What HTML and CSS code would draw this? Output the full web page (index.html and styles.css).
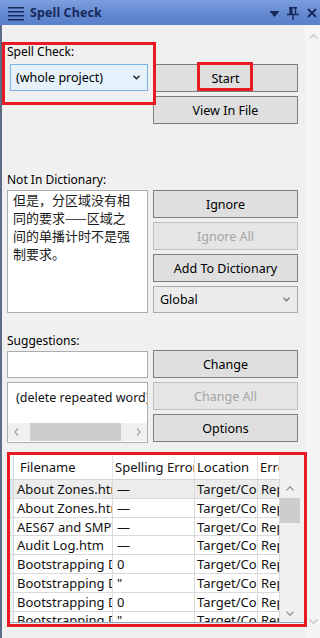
FILE: index.html
```html
<!DOCTYPE html>
<html lang="en">
<head>
<meta charset="utf-8">
<title>Spell Check</title>
<link rel="stylesheet" href="styles.css">
</head>
<body>
<div class="window">
  <div class="titlebar">
    <svg class="menu-icon" viewBox="0 0 16 18" width="16" height="18"><rect x="0" y="3" width="16" height="1.5"/><rect x="0" y="7" width="16" height="1.5"/><rect x="0" y="11" width="16" height="1.5"/><rect x="0" y="15" width="16" height="1.5"/></svg>
    <span class="title">Spell Check</span>
    <div class="tools">
      <svg class="t-drop" viewBox="0 0 9 6" width="9" height="6"><polygon points="0,0 9,0 4.5,5.5"/></svg>
      <svg class="t-pin" viewBox="0 0 12 13" width="12" height="13"><path d="M2 0.75h8M3.5 0.75v6.5M8.5 0.75v6.5M0 7.6h12M6 7.6v5.4" fill="none" stroke-width="1.5"/><rect x="3" y="1" width="2" height="6.5"/></svg>
      <svg class="t-close" viewBox="0 0 10 10" width="10" height="10"><path d="M1 1L9 9M9 1L1 9" fill="none" stroke-width="1.8"/></svg>
    </div>
  </div>
  <div class="panel">
    <div class="content">
      <section class="sec sec-scope">
        <label class="lbl scope-lbl">Spell Check:</label>
        <div class="combo combo-scope"><span>(whole project)</span><svg class="chev" viewBox="0 0 7 5" width="7" height="5"><polyline points="0.5,0.8 3.5,3.8 6.5,0.8"/></svg></div>
        <button class="btn start-btn">Start</button>
        <button class="btn view-btn">View In File</button>
      </section>

      <section class="sec sec-dict">
        <label class="lbl">Not In Dictionary:</label>
        <div class="memo">但是，分区域没有相<br>同的要求—<span class="squiggle">—</span>区域之<br>间的单播计时不是强<br>制要求。</div>
        <div class="stack">
          <button class="btn">Ignore</button>
          <button class="btn btn-disabled">Ignore All</button>
          <button class="btn">Add To Dictionary</button>
          <div class="combo combo-global"><span>Global</span><svg class="chev chev-gray" viewBox="0 0 7 5" width="7" height="5"><polyline points="0.5,0.8 3.5,3.8 6.5,0.8"/></svg></div>
        </div>
      </section>

      <section class="sec sec-sugg">
        <label class="lbl">Suggestions:</label>
        <div class="sugg-left">
          <div class="input"></div>
          <div class="list">
            <div class="list-items">(delete repeated word)</div>
            <div class="hscroll">
              <div class="hs-arrow"><svg viewBox="0 0 5 8" width="5" height="8"><polyline points="4,0.5 1,4 4,7.5"/></svg></div>
              <div class="hs-track"><div class="hs-thumb"></div></div>
              <div class="hs-arrow"><svg viewBox="0 0 5 8" width="5" height="8"><polyline points="1,0.5 4,4 1,7.5"/></svg></div>
            </div>
          </div>
        </div>
        <div class="stack">
          <button class="btn">Change</button>
          <button class="btn btn-disabled">Change All</button>
          <button class="btn">Options</button>
        </div>
      </section>

      <div class="dg">
        <div class="dg-table">
          <div class="dg-row dg-head">
            <div class="c rh"></div>
            <div class="c h h-first">Filename</div>
            <div class="c h">Spelling Errors</div>
            <div class="c h">Location</div>
            <div class="c h">Error Type</div>
          </div>
          <div class="dg-row sel">
            <div class="c rh rh-sel"></div>
            <div class="c">About Zones.htm</div>
            <div class="c c2">—</div>
            <div class="c c3">Target/Content</div>
            <div class="c c4">Repeated</div>
          </div>
          <div class="dg-row">
            <div class="c rh"></div>
            <div class="c">About Zones.htm</div>
            <div class="c c2">—</div>
            <div class="c c3">Target/Content</div>
            <div class="c c4">Repeated</div>
          </div>
          <div class="dg-row">
            <div class="c rh"></div>
            <div class="c">AES67 and SMPTE 2110.htm</div>
            <div class="c c2">—</div>
            <div class="c c3">Target/Content</div>
            <div class="c c4">Repeated</div>
          </div>
          <div class="dg-row">
            <div class="c rh"></div>
            <div class="c">Audit Log.htm</div>
            <div class="c c2">—</div>
            <div class="c c3">Target/Content</div>
            <div class="c c4">Repeated</div>
          </div>
          <div class="dg-row">
            <div class="c rh"></div>
            <div class="c">Bootstrapping Devices.htm</div>
            <div class="c c2">0</div>
            <div class="c c3">Target/Content</div>
            <div class="c c4">Repeated</div>
          </div>
          <div class="dg-row">
            <div class="c rh"></div>
            <div class="c">Bootstrapping Devices.htm</div>
            <div class="c c2">"</div>
            <div class="c c3">Target/Content</div>
            <div class="c c4">Repeated</div>
          </div>
          <div class="dg-row">
            <div class="c rh"></div>
            <div class="c">Bootstrapping Devices.htm</div>
            <div class="c c2">0</div>
            <div class="c c3">Target/Content</div>
            <div class="c c4">Repeated</div>
          </div>
          <div class="dg-row">
            <div class="c rh"></div>
            <div class="c">Bootstrapping Devices.htm</div>
            <div class="c c2">"</div>
            <div class="c c3">Target/Content</div>
            <div class="c c4">Repeated</div>
          </div>
        </div>
        <div class="dg-vscroll">
          <div class="dv-head"></div>
          <div class="dv-arrow"><svg viewBox="0 0 8 5" width="8" height="5"><polyline points="0.5,4.3 4,0.8 7.5,4.3"/></svg></div>
          <div class="dv-thumb"></div>
          <div class="dv-fill"></div>
          <div class="dv-arrow"><svg viewBox="0 0 8 5" width="8" height="5"><polyline points="0.5,0.7 4,4.2 7.5,0.7"/></svg></div>
        </div>
      </div>

      <div class="mark mark-scope"></div>
      <div class="mark mark-start"></div>
      <div class="mark mark-grid"></div>
    </div>
    <div class="vscroll">
      <div class="vs-arrow"><svg viewBox="0 0 9 5" width="9" height="5"><polyline points="0.5,4.4 4.5,0.8 8.5,4.4"/></svg></div>
      <div class="vs-arrow"><svg viewBox="0 0 9 5" width="9" height="5"><polyline points="0.5,0.6 4.5,4.2 8.5,0.6"/></svg></div>
    </div>
  </div>
</div>
</body>
</html>
```

FILE: styles.css
```css
* { box-sizing: border-box; }
html, body { margin: 0; padding: 0; }
body {
  width: 320px;
  height: 638px;
  overflow: hidden;
  background: #f0f0f0;
  font-family: "Noto Sans", "Open Sans", sans-serif;
  font-size: 12px;
  color: #000;
}
.window {
  width: 320px;
  height: 638px;
  display: flex;
  flex-direction: column;
}

/* title bar */
.titlebar {
  height: 25px;
  flex: none;
  display: flex;
  align-items: center;
  padding-left: 8px;
  background: linear-gradient(#7c9fdf, #6287cf 60%, #5a80ca);
  color: #17295a;
}
.menu-icon { align-self: flex-start; margin-top: 4px; fill: #17295a; display: block; }
.title {
  margin-left: 6px;
  font-weight: 700;
  font-size: 12.5px;
  line-height: 25px;
  letter-spacing: 0.1px;
}
.tools {
  margin-left: auto;
  display: flex;
  align-items: center;
  gap: 8px;
  padding-right: 3px;
}
.tools svg { display: block; fill: #17295a; stroke: #17295a; }
.t-drop { stroke: none; margin-top: 2px; }
.t-pin { margin-top: 2px; }
.t-close { margin-top: 0; }

/* panel */
.panel { flex: 1; display: flex; min-height: 0; }
.content {
  position: relative;
  width: 305px;
  flex: none;
  border-left: 2px solid #5d6c86;
  padding-left: 5px;
  display: flex;
  flex-direction: column;
}
.vscroll {
  flex: 1;
  overflow: hidden;
  background: #f5f5f5;
  display: flex;
  flex-direction: column;
  justify-content: space-between;
  padding-bottom: 6px;
}
.vs-arrow {
  width: 17px;
  height: 22px;
  display: flex;
  align-items: center;
  justify-content: center;
}
.vs-arrow svg { fill: none; stroke: #c2c2c2; stroke-width: 1.3; display: block; }

/* sections */
.sec {
  display: grid;
  grid-template-columns: 141px 145px;
  column-gap: 5px;
}
.lbl { line-height: 16px; white-space: nowrap; grid-column: 1; }
.sec-scope {
  margin-top: 19px;
  grid-template-rows: 16px 28px 28px;
  row-gap: 4px;
}
.scope-lbl { grid-row: 1; }
.combo-scope { grid-column: 1; grid-row: 2; }
.start-btn { grid-column: 2; grid-row: 2; }
.view-btn { grid-column: 2; grid-row: 3; }

.sec-dict { margin-top: 48px; row-gap: 2px; }
.sec-dict .memo { grid-column: 1; grid-row: 2; }
.sec-dict .stack { grid-column: 2; grid-row: 2; }

.sec-sugg { margin-top: 20px; row-gap: 1px; }
.sugg-left { grid-column: 1; grid-row: 2; }
.sec-sugg .stack { grid-column: 2; grid-row: 2; }

.stack { display: flex; flex-direction: column; gap: 4px; }

.btn {
  height: 28px;
  margin: 0;
  padding: 0;
  border: 1px solid #7d7d7d;
  background: #dfdfdf;
  font-family: inherit;
  font-size: 12.5px;
  color: #000;
  display: flex;
  align-items: center;
  justify-content: center;
  white-space: nowrap;
}
.btn-disabled {
  color: #a4a4a4;
  border-color: #bfbfbf;
  background: #e5e5e5;
}

.combo {
  height: 27px;
  border: 1px solid #acacac;
  background: #ebebeb;
  display: flex;
  align-items: center;
  justify-content: space-between;
  padding: 0 7px 0 6px;
  font-size: 12.5px;
  white-space: nowrap;
}
.combo-scope {
  margin-left: 3px;
  width: 138px;
  align-self: start;
  border-color: #7eb4ea;
  background: #e5f1fb;
  padding: 0 7px 0 5px;
}
.chev { display: block; fill: none; stroke: #222; stroke-width: 1.4; }
.chev-gray { stroke: #7a7a7a; }

.memo {
  height: 123px;
  border: 1px solid #abadb3;
  background: #fff;
  padding: 0 5px;
  font-family: "Noto Sans CJK SC", "Noto Sans", sans-serif;
  font-size: 13px;
  line-height: 18px;
  color: #1a1a1a;
}
.squiggle {
  text-decoration: underline solid #e81123 1.5px;
  text-underline-offset: 0px;
}

.input {
  margin-top: 1px;
  height: 27px;
  border: 1px solid #abadb3;
  background: #fff;
}
.list {
  margin-top: 4px;
  height: 61px;
  border: 1px solid #abadb3;
  background: #fff;
  display: flex;
  flex-direction: column;
  overflow: hidden;
}
.list-items {
  flex: 1;
  padding: 7px 0 0 8px;
  font-size: 12.5px;
  line-height: 16px;
  white-space: nowrap;
  overflow: hidden;
  color: #111;
}
.hscroll {
  height: 18px;
  margin-bottom: 1px;
  background: #f0f0f0;
  display: flex;
  align-items: stretch;
}
.hs-arrow {
  width: 17px;
  flex: none;
  display: flex;
  align-items: center;
  justify-content: center;
}
.hs-arrow svg { display: block; fill: none; stroke: #a6a6a6; stroke-width: 1.2; }
.hs-track { flex: 1; display: flex; align-items: center; }
.hs-thumb { margin-left: 5px; width: 91px; height: 18px; background: #cdcdcd; }

/* data grid */
.dg {
  margin-top: 12px;
  margin-left: 3px;
  width: 294px;
  height: 168px;
  display: flex;
  background: #f0f0f0;
  border-bottom: 1px solid #8ea7cc;
  overflow: hidden;
}
.dg-table { width: 270px; flex: none; background: #fff; }
.dg-row {
  display: grid;
  grid-template-columns: 4px 99px 82px 63px 22px;
  height: 18.8px;
}
.dg-row.dg-head { height: 25px; }
.c {
  border-right: 1px solid #dadada;
  border-bottom: 1px solid #dadada;
  overflow: hidden;
  white-space: nowrap;
  font-size: 13px;
  padding-left: 3px;
  display: flex;
  align-items: center;
  color: #111;
}
.c2 { padding-left: 4px; }
.c3 { padding-left: 2px; }
.c4 { padding-left: 3px; }
.rh { padding: 0; background: #f3f3f3; }
.rh-sel { background: #dde7f3; }
.h { background: #fff; border-right-color: #e4e4e4; border-bottom-color: #d5d5d5; padding-left: 2px; }
.h-first { padding-left: 6px; }
.dg-head .rh { background: #fff; border-bottom-color: #d5d5d5; }
.sel .c:not(.rh) { background: #ececec; }

.dg-vscroll {
  width: 24px;
  flex: none;
  display: flex;
  flex-direction: column;
  background: #f0f0f0;
}
.dv-head { height: 25px; flex: none; }
.dv-arrow {
  width: 20px;
  height: 17px;
  flex: none;
  display: flex;
  align-items: center;
  justify-content: center;
}
.dv-arrow svg { display: block; fill: none; stroke: #8a8a8a; stroke-width: 1.2; }
.dv-thumb { width: 20px; height: 25px; margin-top: 1px; background: #cdcdcd; flex: none; }
.dv-fill { flex: 1; }

/* annotation boxes */
.mark {
  position: absolute;
  border: 3px solid #ea1a24;
  pointer-events: none;
}
.mark-scope { left: 0; top: 17px; width: 154px; height: 63px; }
.mark-start { left: 195px; top: 37px; width: 56px; height: 29px; }
.mark-grid { left: 5px; top: 427px; width: 300px; height: 175px; }
```
